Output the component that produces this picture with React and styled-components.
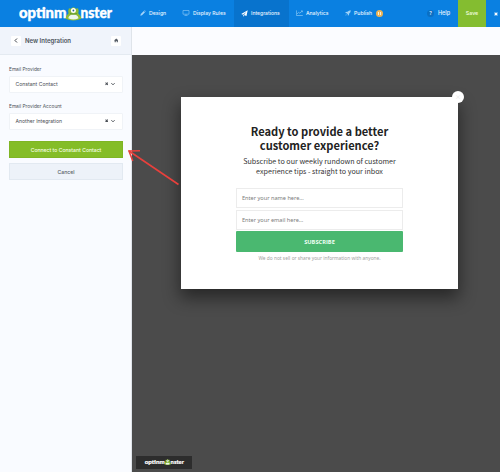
import React from "react";
import styled, { createGlobalStyle } from "styled-components";

const Global = createGlobalStyle`
  *, *::before, *::after { box-sizing: border-box; }
  html, body { margin: 0; padding: 0; }
  body { font-family: Inter, "Open Sans", sans-serif; overflow: hidden; }
  button { font: inherit; border: 0; margin: 0; padding: 0; }
  svg { display: block; flex: none; }
`;

const Page = styled.div`
  position: relative;
  width: 500px;
  height: 472px;
  display: flex;
  flex-direction: column;
  background: #4b4b4b;
`;

const TopBar = styled.header`
  height: 27px;
  flex: none;
  display: flex;
  background: #0a80e1;
  color: #e8f4ff;
`;

const LogoArea = styled.div`
  width: 132px;
  padding: 4px 0 0 18px;
`;

const NavItem = styled.a`
  width: ${(p) => p.$width}px;
  padding-left: ${(p) => p.$pad}px;
  padding-bottom: 1px;
  display: flex;
  align-items: center;
  gap: 3px;
  background: ${(p) => (p.$active ? "#0873cd" : "transparent")};
  font-size: ${(p) => p.$size || 5.5}px;
  font-weight: 500;
  white-space: nowrap;
`;

const Badge = styled.span`
  width: 7px;
  height: 7px;
  border-radius: 50%;
  background: #eeb354;
  display: flex;
  align-items: center;
  justify-content: center;
  gap: 1px;
  margin-left: 1px;

  &::before, &::after {
    content: "";
    width: 1px;
    height: 3px;
    background: #fff3d8;
  }
`;

const HelpLink = styled.a`
  margin-left: auto;
  width: 31px;
  padding-bottom: 1px;
  display: flex;
  align-items: center;
  gap: 4px;
  font-size: 5.5px;
  font-weight: 500;
`;

const HelpMark = styled.span`
  width: 7px;
  height: 7px;
  border-radius: 50%;
  background: #0b6fc3;
  font-size: 5px;
  line-height: 7px;
  text-align: center;
`;

const SaveButton = styled.button`
  width: 28px;
  padding-bottom: 1px;
  background: #84bd30;
  color: #f4ffe2;
  font-size: 5.3px;
  font-weight: 500;
`;

const CloseArea = styled.div`
  width: 14px;
  display: flex;
  align-items: center;
  padding-left: 8px;
`;

const Body = styled.div`
  flex: 1;
  display: flex;
  min-height: 0;
`;

const Sidebar = styled.aside`
  width: 132px;
  flex: none;
  background: #f9fbff;
  color: #4c5158;
  border-right: 1px solid #dfe4ea;
`;

const PanelHead = styled.div`
  height: 28px;
  padding: 0 10px 0 11px;
  display: flex;
  align-items: center;
  background: #f0f4fb;
  border-bottom: 1px solid #e4eaf1;
`;

const SquareButton = styled.button`
  width: 10px;
  height: 10px;
  border-radius: 1px;
  background: #fff;
  display: flex;
  align-items: center;
  justify-content: center;
`;

const PanelTitle = styled.h2`
  margin: 0;
  flex: 1;
  padding-left: 4px;
  font-size: 6px;
  font-weight: 600;
  color: #4c535c;
`;

const Form = styled.div`
  padding: 11px 8px 0 9px;
`;

const Label = styled.div`
  height: 10px;
  line-height: 7px;
  font-size: 4.8px;
  white-space: nowrap;
`;

const Select = styled.div`
  height: 17px;
  margin-bottom: ${(p) => p.$gap}px;
  padding: 0 7px 1px 5.5px;
  display: flex;
  align-items: center;
  background: #fff;
  border: 1px solid #f0f3f7;
  border-radius: 1px;
  font-size: 5.12px;
`;

const SelectValue = styled.span`
  flex: 1;
  white-space: nowrap;
`;

const Action = styled.button`
  display: block;
  width: 114px;
  height: 17px;
  margin-top: ${(p) => p.$top}px;
  background: ${(p) => (p.$primary ? "#84bd27" : "#edf2f9")};
  color: ${(p) => (p.$primary ? "#f6ffe5" : "#565d66")};
  border: 1px solid ${(p) => (p.$primary ? "#7fb524" : "#e2e9f1")};
  font-size: 5.1px;
  font-weight: 500;
  white-space: nowrap;
`;

const Main = styled.main`
  flex: 1;
  display: flex;
  flex-direction: column;
  align-items: flex-start;
`;

const Strip = styled.div`
  align-self: stretch;
  height: 28px;
  flex: none;
  background: #fbfcff;
`;

const Canvas = styled.section`
  align-self: stretch;
  flex: 1;
  padding: 42px 0 0 49px;
  background: #4b4b4b;
`;

const Modal = styled.div`
  position: relative;
  width: 277px;
  height: 191.5px;
  padding-top: 27px;
  display: flex;
  flex-direction: column;
  align-items: center;
  background: #fff;
  box-shadow: 0 8px 16px 1px rgba(0, 0, 0, 0.48);
  font-family: "Noto Sans CJK SC", "Noto Sans", sans-serif;
  text-align: center;
  white-space: nowrap;
`;

const ModalClose = styled.span`
  position: absolute;
  top: -6px;
  right: -6px;
  width: 12px;
  height: 12px;
  border-radius: 50%;
  background: #fff;
  color: #e3e3e3;
  font-size: 6px;
  line-height: 11px;
`;

const Heading = styled.h1`
  margin: 0;
  display: flex;
  flex-direction: column;
  font-size: 11.1px;
  line-height: 14px;
  font-weight: 600;
  color: #222;
`;

const Lead = styled.p`
  margin: 5px 0 0;
  font-size: 7.15px;
  line-height: 9.5px;
  color: #333;
`;

const Field = styled.div`
  width: 167px;
  height: 20px;
  margin-top: ${(p) => p.$top}px;
  padding-left: 5px;
  border: 1px solid #ececec;
  font-family: "Noto Sans", sans-serif;
  font-size: 5.6px;
  line-height: 19px;
  text-align: left;
  color: #7b7b7b;
`;

const Subscribe = styled.button`
  width: 167px;
  height: 21px;
  margin-top: 1.5px;
  background: #4ab870;
  color: #effff4;
  border-radius: 1px;
  font-family: "Open Sans", sans-serif;
  font-size: 5.7px;
  font-weight: 700;
`;

const Note = styled.p`
  margin: 2.5px 0 0;
  font-family: "Noto Sans", sans-serif;
  font-size: 4.83px;
  line-height: 7px;
  color: #a2a2a2;
`;

const Powered = styled.footer`
  width: 56px;
  height: 13px;
  position: absolute;
  left: 136px;
  top: 456px;
  padding: 2px 0 0 7.5px;
  background: #2d2d2d;
`;

const Arrow = styled.svg`
  position: absolute;
  left: 124px;
  top: 144px;
`;

const Logo = ({ width, height }) => (
  <svg width={width} height={height} viewBox="0 0 96 19">
    <g fill="#fff" stroke="#fff" strokeWidth="0.4" fontFamily="Lato, sans-serif" fontWeight="900" fontSize="14.5">
      <text x="1" y="14" textLength="47.5" lengthAdjust="spacingAndGlyphs">optinm</text>
      <text x="62.5" y="14" textLength="31.5" lengthAdjust="spacingAndGlyphs">nster</text>
    </g>
    <path d="M47.6 14.8Q48.2 11 50.6 9.2Q49.6 6.6 51 4.2L52.8 4.8Q55.4 1.6 58 4.8L60 4.2Q61.2 6.6 60.2 9.2Q62.6 11 63.2 14.8Q60 16.4 55.4 16.4T47.6 14.8Z" fill="#8dbb35" />
    <path d="M50.3 14.3Q51 10.6 55.4 10.6T60.5 14.3Q58 15.6 55.4 15.6T50.3 14.3Z" fill="#edf7ed" />
    <circle cx="55.4" cy="6.4" r="2.5" fill="#fff" />
    <circle cx="55.4" cy="6.5" r="0.9" fill="#28678b" />
    <path d="M52 9.5Q55.4 11 58.8 9.5" fill="none" stroke="#4f8b2f" strokeWidth="0.8" />
  </svg>
);

const Cross = ({ size = 4, color = "#4c5158" }) => (
  <svg width={size} height={size} viewBox="0 0 4 4">
    <path d="M.6.6 3.4 3.4M3.4.6.6 3.4" stroke={color} strokeWidth="1.2" />
  </svg>
);

const SelectTools = styled.span`
  display: flex;
  align-items: center;
  gap: 3px;
`;

const SelectIcons = () => (
  <SelectTools>
    <Cross size={3.5} />
    <svg width="4" height="4" viewBox="0 0 4 4" fill="none" stroke="#4c5158" strokeWidth="1">
      <path d="M.4 1.2 2 2.8 3.6 1.2" />
    </svg>
  </SelectTools>
);

export default function App() {
  return (
    <>
      <Global />
      <Page>
        <TopBar>
          <LogoArea><Logo width={96} height={19} /></LogoArea>
          <NavItem $width={42} $pad={8} $size={5.2}>
            <svg width="6" height="6" viewBox="0 0 6 6">
              <path d="M.3 5.7.8 4 3.8 1 5 2.2 2 5.2ZM4.2.6 4.7.2 5.8 1.3 5.4 1.8Z" fill="#a5d4fa" />
            </svg>
            Design
          </NavItem>
          <NavItem $width={60} $pad={8} $size={5.1}>
            <svg width="8" height="6" viewBox="0 0 8 6" fill="none" stroke="#80c1f5" strokeWidth=".7">
              <path d="M1 .5H7V4.2H1ZM4 4.2V5.5M2.4 5.6H5.6" />
            </svg>
            Display Rules
          </NavItem>
          <NavItem $width={55} $pad={7} $active $size={5.05}>
            <svg width="7" height="7" viewBox="0 0 7 7">
              <path d="M6.7.3.2 3.9 2 4.7 5.5 1.8 2.9 5 5.5 6.1ZM2.1 5V6.8L3.3 5.6Z" fill="#fff" />
            </svg>
            Integrations
          </NavItem>
          <NavItem $width={48} $pad={7} $size={5.05}>
            <svg width="7" height="6" viewBox="0 0 7 6" fill="none" stroke="#8bc9f5" strokeWidth=".7">
              <path d="M.4.4V5.5H6.8M1 3.9 2.7 2.4 3.8 3.2 6.2 1M5 .9H6.4V2.2" />
            </svg>
            Analytics
          </NavItem>
          <NavItem $width={55} $pad={8} $size={5.2}>
            <svg width="6" height="6" viewBox="0 0 6 6">
              <path d="M5.8.2Q3.6.2 2.5 1.8L.9 2 .2 3.1 1.7 3.2 2.8 4.3 2.9 5.8 4 5.1 4.2 3.5Q5.8 2.4 5.8.2ZM.4 5.6 1 4.2 1.8 5Z" fill="#9bd0f7" />
            </svg>
            Publish
            <Badge />
          </NavItem>
          <HelpLink><HelpMark>?</HelpMark>Help</HelpLink>
          <SaveButton>Save</SaveButton>
          <CloseArea><Cross color="#fff" /></CloseArea>
        </TopBar>
        <Body>
          <Sidebar>
            <PanelHead>
              <SquareButton aria-label="Back">
                <svg width="4" height="5" viewBox="0 0 4 5" fill="none" stroke="#3c4148" strokeWidth="1">
                  <path d="M3 .5 1 2.5 3 4.5" />
                </svg>
              </SquareButton>
              <PanelTitle>New Integration</PanelTitle>
              <SquareButton aria-label="Home">
                <svg width="4.5" height="4.5" viewBox="0 0 5 5">
                  <path d="M2.5.5 0 2.7H.7V4.6H2V3.2H3V4.6H4.3V2.7H5Z" fill="#555c66" />
                </svg>
              </SquareButton>
            </PanelHead>
            <Form>
              <Label>Email Provider</Label>
              <Select $gap={9.5}><SelectValue>Constant Contact</SelectValue><SelectIcons /></Select>
              <Label>Email Provider Account</Label>
              <Select $gap={11.5}><SelectValue>Another Integration</SelectValue><SelectIcons /></Select>
              <Action $primary $top={0}>Connect to Constant Contact</Action>
              <Action $top={5}>Cancel</Action>
            </Form>
          </Sidebar>
          <Main>
            <Strip />
            <Canvas>
              <Modal>
                <ModalClose>×</ModalClose>
                <Heading><span>Ready to provide a better</span><span>customer experience?</span></Heading>
                <Lead>Subscribe to our weekly rundown of customer<br />experience tips - straight to your inbox</Lead>
                <Field $top={12}>Enter your name here...</Field>
                <Field $top={1.5}>Enter your email here...</Field>
                <Subscribe>SUBSCRIBE</Subscribe>
                <Note>We do not sell or share your information with anyone.</Note>
              </Modal>
            </Canvas>
          </Main>
        </Body>
        <Powered><Logo width={41} height={8} /></Powered>
        <Arrow width="60" height="46" viewBox="0 0 60 46" fill="none" stroke="#e8403c" strokeWidth="1.6">
          <path d="M54.5 40.5 5 7" />
          <path d="M16 6.8 5 7 8.8 17" />
        </Arrow>
      </Page>
    </>
  );
}
